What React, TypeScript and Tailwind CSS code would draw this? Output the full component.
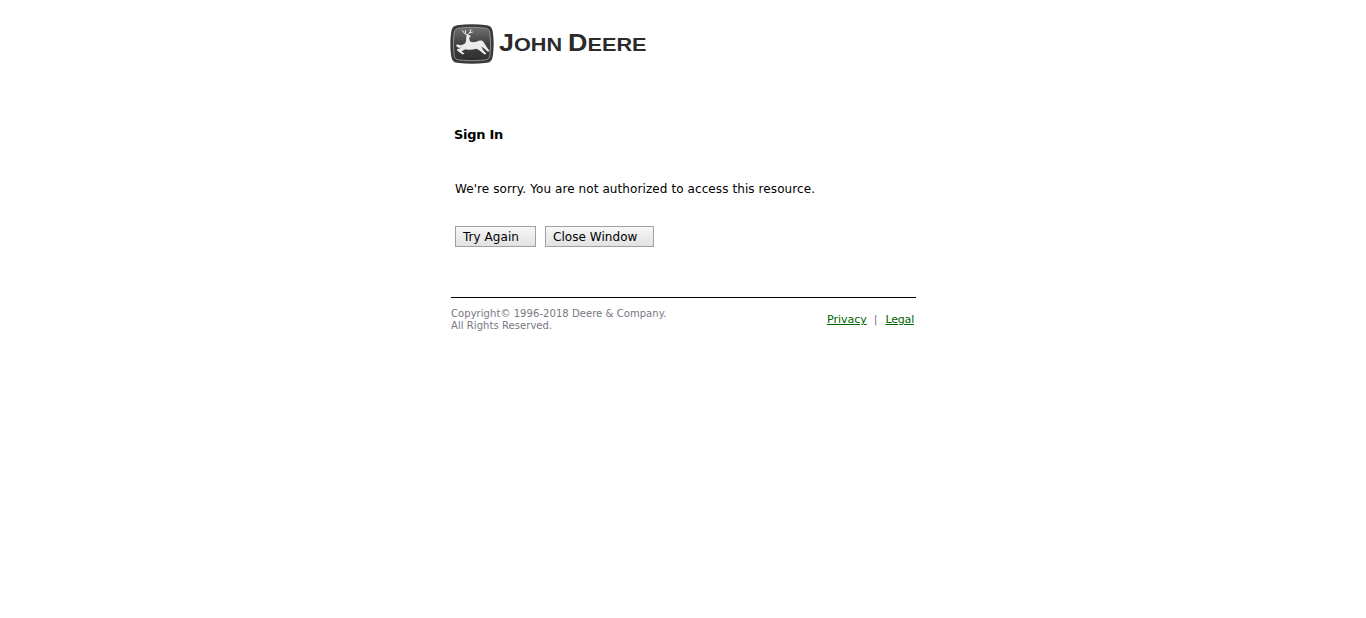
export default function App() {
  const font = "font-['DejaVu_Sans','Verdana',sans-serif]";
  return (
    <div className={`min-h-[618px] bg-white ${font} text-black`}>
      <div className="mx-auto w-[466px] pl-px">
        <div className="flex h-[64px] items-end">
          <div className="flex items-center">
            <svg width="44" height="40" viewBox="0 0 44 40" className="-ml-[1px]">
              <defs>
                <linearGradient id="g" x1="0" y1="0" x2="0" y2="1">
                  <stop offset="0" stopColor="#707070" />
                  <stop offset="0.5" stopColor="#404040" />
                  <stop offset="1" stopColor="#2e2e2e" />
                </linearGradient>
              </defs>
              <path d="M7 1.2C17 -0.2 27 -0.2 37 1.2C40.5 1.8 42 3.5 42.6 7C44 15 44 25 42.6 33C42 36.5 40.5 38.2 37 38.8C27 40.2 17 40.2 7 38.8C3.5 38.2 2 36.5 1.4 33C0 25 0 15 1.4 7C2 3.5 3.5 1.8 7 1.2Z" fill="#3a3a3a" />
              <path d="M8.5 4.2C17 3 27 3 35.5 4.2C38 4.6 39.2 5.8 39.7 8.2C40.8 15.5 40.8 24.5 39.7 31.8C39.2 34.2 38 35.4 35.5 35.8C27 37 17 37 8.5 35.8C6 35.4 4.8 34.2 4.3 31.8C3.2 24.5 3.2 15.5 4.3 8.2C4.8 5.8 6 4.6 8.5 4.2Z" fill="url(#g)" stroke="#9a9a9a" strokeWidth="0.9" />
              <g fill="none" stroke="#e8e8e8" strokeWidth="1" strokeLinecap="round">
                <path d="M12.5 6.5L14.5 9.5L17.5 11M15.5 6.5L15.5 9.5M21 5.5L19.5 9L17.5 11M22.5 8L19.5 9" />
              </g>
              <path d="M16.5 10.5L19.5 11L21 13L19 13.6L20 17.5C23 18.6 26 18.2 29 16.8C31 16 33 16.6 33.6 18L36 22L39.5 27L37.8 27.8L33.5 24L31.5 22.6C32.5 25.5 33.5 27 36.5 29.8L34.6 30.4L28.5 25.8L26 24.8C22.5 26 18.5 26 15.5 25.2L11.5 27.2L14.5 29.8L12.6 30.6L7 26.6L7.4 25L12.6 23.4L9 24L6 22L7 20.2L10.5 21.2L14.5 20L16 17.5Z" fill="#ececec" />
            </svg>
            <span className="ml-[5px] -mt-[2px] inline-block origin-left scale-x-[1.17] font-['Liberation_Sans',sans-serif] text-[23px] font-bold leading-none whitespace-nowrap text-[#2b2b2b]">
              J<span className="text-[18.5px]">OHN </span>D<span className="text-[18.5px]">EERE</span>
            </span>
          </div>
        </div>
        <h1 className="mt-[63px] ml-[3px] text-[13px] leading-[16px] font-bold tracking-[-0.3px]">Sign In</h1>
        <p className="mt-[38px] ml-[4px] text-[12px] leading-[16px] tracking-[0.09px]">
          We're sorry. You are not authorized to access this resource.
        </p>
        <div className="mt-[29px] ml-[4px] flex gap-[9px]">
          <button className="h-[21px] w-[81px] border border-[#a0a0a0] bg-gradient-to-b from-[#f7f7f7] to-[#e2e2e2] pl-[7px] text-left text-[12px] leading-none tracking-[0.05px]">
            Try Again
          </button>
          <button className="h-[21px] w-[109px] border border-[#a0a0a0] bg-gradient-to-b from-[#f7f7f7] to-[#e2e2e2] pl-[7px] text-left text-[12px] leading-none tracking-[0.05px]">
            Close Window
          </button>
        </div>
        <div className="mt-[50px] flex w-[465px] items-center justify-between border-t border-black pt-[10px]">
          <div className="text-[10px] leading-[12px] tracking-[0.06px] text-[#77777f]">
            <div>Copyright© 1996-2018 Deere &amp; Company.</div>
            <div>All Rights Reserved.</div>
          </div>
          <div className="flex items-center pr-[2px] text-[11px] leading-[14px] text-[#77777f]">
            <a href="#" className="text-[#006400] underline">Privacy</a>
            <span className="ml-[7px] mr-[8px]">|</span>
            <a href="#" className="tracking-[-0.2px] text-[#006400] underline">Legal</a>
          </div>
        </div>
      </div>
    </div>
  );
}
